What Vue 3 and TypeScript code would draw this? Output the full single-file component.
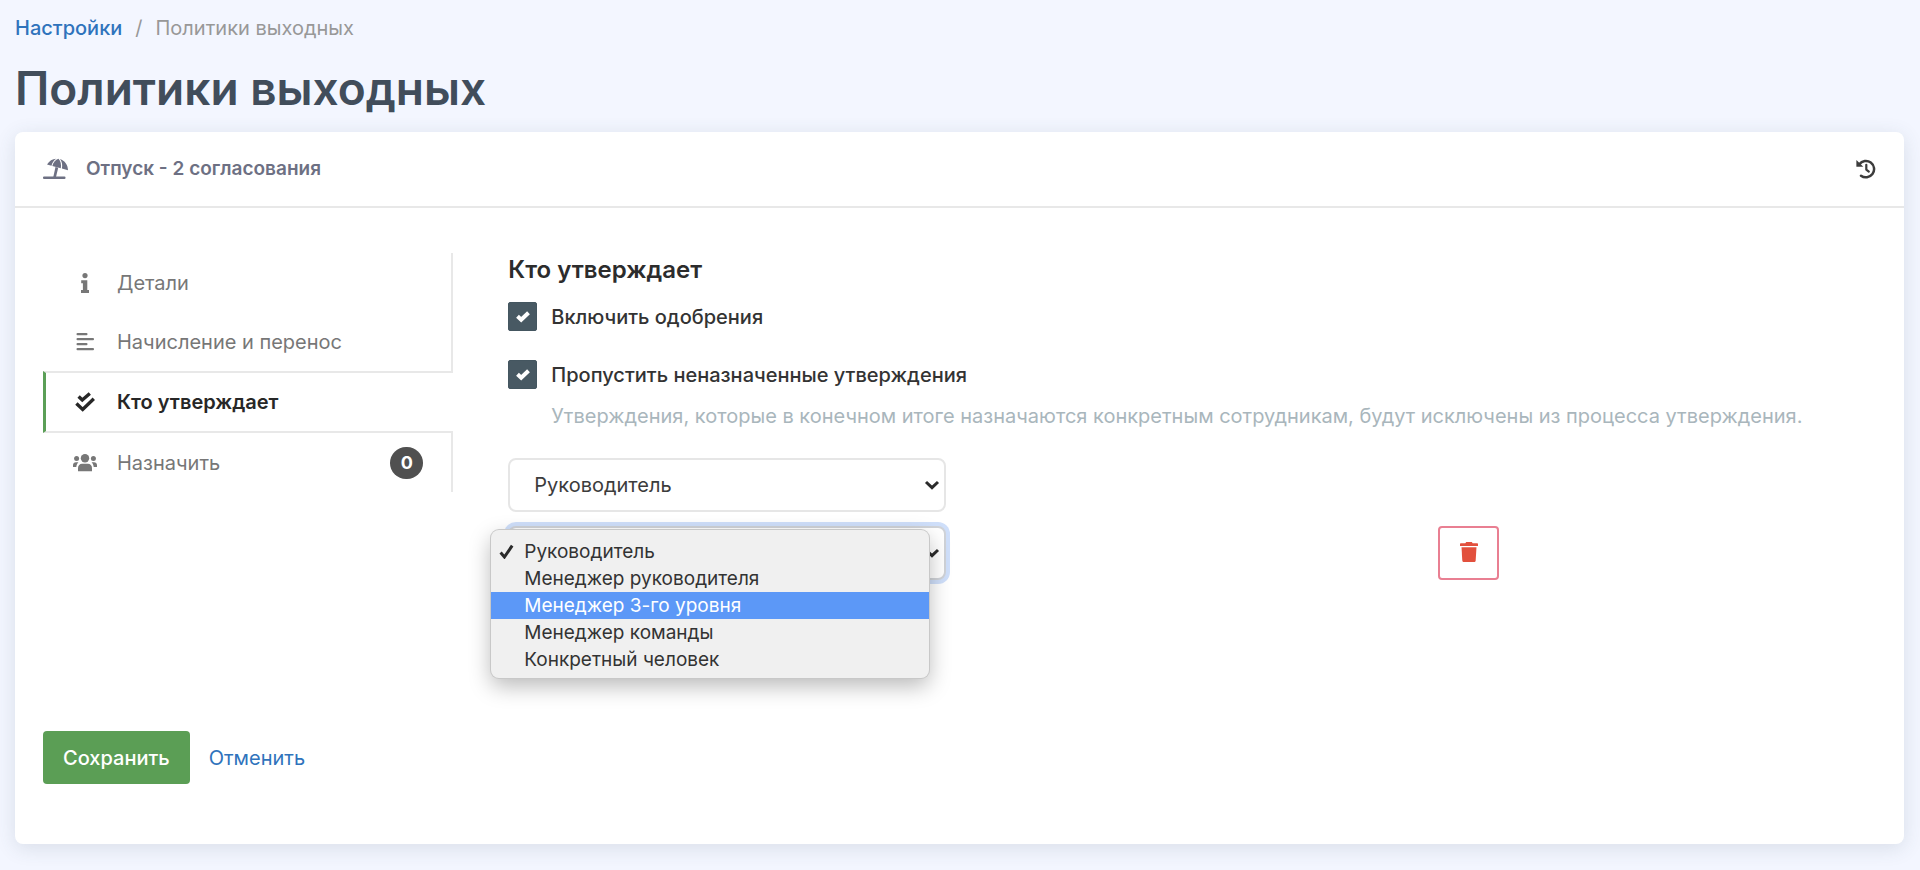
<script setup lang="ts">
import { ref } from 'vue'

interface Tab {
  id: string
  label: string
  count?: number
}

const tabs: Tab[] = [
  { id: 'details', label: 'Детали' },
  { id: 'accrual', label: 'Начисление и перенос' },
  { id: 'approvers', label: 'Кто утверждает' },
  { id: 'assign', label: 'Назначить', count: 0 },
]
const activeTab = ref('approvers')

const roles: string[] = [
  'Руководитель',
  'Менеджер руководителя',
  'Менеджер 3-го уровня',
  'Менеджер команды',
  'Конкретный человек',
]
const firstApprover = ref(roles[0])
const secondApprover = ref(roles[0])
const highlighted = ref(2)
const menuOpen = ref(true)

const approvalsEnabled = ref(true)
const skipUnassigned = ref(true)

function choose(role: string): void {
  secondApprover.value = role
  menuOpen.value = false
}
</script>

<template>
  <div class="page">
    <nav class="crumbs" aria-label="Навигация">
      <a href="#">Настройки</a>
      <span class="slash">/</span>
      <span>Политики выходных</span>
    </nav>
    <h1>Политики выходных</h1>

    <form class="card" @submit.prevent>
      <header class="card-head">
        <svg class="umbrella" viewBox="0 0 26 22" aria-hidden="true">
          <g fill="currentColor">
            <path d="M4 6.6C6.2 2.800 9.500.8 13.200.7 10.800 2.300 9.200 4.600 8.500 7.700Z" />
            <path d="M9.300 8C10.300 4.500 12.300 1.900 15.500.8 17.800 3.200 18.400 6.600 17.800 10.200Z" />
            <path d="M17 1.100C21.800 2.800 24.900 6.800 25 12.300L18.900 10.600C19.600 7 19.200 3.900 17 1.100Z" />
            <path d="M12.500 9 15.200 9.800 13 19H10.300Z" />
            <rect x="0" y="18.500" width="22.500" height="2.400" rx="1" />
          </g>
        </svg>
        <h2>Отпуск - 2 согласования</h2>
        <button type="button" class="history" aria-label="История">
          <svg viewBox="0 0 20 20" fill="none" stroke="currentColor" aria-hidden="true">
            <path d="M3.300 5.200A8.200 8.200 0 1 1 5 16.700" stroke-width="2.500" stroke-linecap="round" />
            <path d="M.4 1V7.700H7.300Z" fill="currentColor" stroke="none" />
            <path d="M10.300 5.800V10.600L12.800 12.600" stroke-width="2.200" stroke-linecap="round" stroke-linejoin="round" />
          </svg>
        </button>
      </header>

      <div class="card-body">
        <div class="columns">
          <nav class="tabs" aria-label="Разделы политики">
            <a
              v-for="tab in tabs"
              :key="tab.id"
              href="#"
              class="tab"
              :class="{ active: tab.id === activeTab }"
              @click.prevent="activeTab = tab.id"
            >
              <svg v-if="tab.id === 'details'" viewBox="0 0 24 20" fill="currentColor" aria-hidden="true">
                <circle cx="12" cy="2.600" r="2.600" />
                <path d="M8.200 7.200H14.300V16.900H16V20H8V16.900H9.900V10.300H8.200Z" />
              </svg>
              <svg v-else-if="tab.id === 'accrual'" viewBox="0 0 24 20" fill="currentColor" aria-hidden="true">
                <rect x="3.500" y="1" width="11" height="2.200" rx="1" />
                <rect x="3.500" y="6" width="17.500" height="2.200" rx="1" />
                <rect x="3.500" y="11" width="11" height="2.200" rx="1" />
                <rect x="3.500" y="16" width="17.500" height="2.200" rx="1" />
              </svg>
              <svg v-else-if="tab.id === 'approvers'" viewBox="0 0 24 20" fill="none" stroke="currentColor" stroke-width="3.400" aria-hidden="true">
                <path d="M5.600 4.500 9.300 8 16.800 1.500" />
                <path d="M3.400 11.500 9.700 17.400 20.800 6.800" />
              </svg>
              <svg v-else viewBox="0 0 24 20" fill="currentColor" aria-hidden="true">
                <circle cx="12" cy="5.300" r="4.200" />
                <path d="M5 18.200V15.300C5 12.400 6.800 10.800 9 10.800H15C17.200 10.800 19 12.400 19 15.300V18.200Z" />
                <circle cx="3.600" cy="5.600" r="2.500" />
                <circle cx="20.400" cy="5.600" r="2.500" />
                <path d="M0 14V12.200C0 10.500 1.200 9.300 3 9.300H5.400C4.200 10.600 3.400 12.200 3.300 14Z" />
                <path d="M24 14V12.200C24 10.500 22.800 9.300 21 9.300H18.600C19.800 10.600 20.600 12.200 20.700 14Z" />
              </svg>
              <span class="tab-label">{{ tab.label }}</span>
              <span v-if="tab.count !== undefined" class="badge">{{ tab.count }}</span>
            </a>
          </nav>

          <section class="panel">
            <h3>Кто утверждает</h3>

            <div class="check">
              <span class="box">
                <input id="enable" v-model="approvalsEnabled" type="checkbox" />
                <svg viewBox="0 0 14 12" aria-hidden="true"><path d="M1.500 5.300 5.200 8.800 12.500 1.800" /></svg>
              </span>
              <label for="enable">Включить одобрения</label>
            </div>
            <div class="check">
              <span class="box">
                <input id="skip" v-model="skipUnassigned" type="checkbox" aria-describedby="skip-hint" />
                <svg viewBox="0 0 14 12" aria-hidden="true"><path d="M1.500 5.300 5.200 8.800 12.500 1.800" /></svg>
              </span>
              <label for="skip">Пропустить неназначенные утверждения</label>
            </div>
            <p id="skip-hint" class="hint">
              Утверждения, которые в конечном итоге назначаются конкретным сотрудникам, будут исключены из процесса утверждения.
            </p>

            <div class="row">
              <div class="field">
                <select v-model="firstApprover" aria-label="Первый утверждающий">
                  <option v-for="role in roles" :key="role">{{ role }}</option>
                </select>
                <svg class="chevron" viewBox="0 0 16 10" aria-hidden="true"><path d="M2 2 8 7.600 14 2" /></svg>
              </div>
            </div>
            <div class="row">
              <div class="field focused">
                <select v-model="secondApprover" aria-label="Второй утверждающий">
                  <option v-for="role in roles" :key="role">{{ role }}</option>
                </select>
                <svg class="chevron" viewBox="0 0 16 10" aria-hidden="true"><path d="M2 2 8 7.600 14 2" /></svg>
                <ul v-if="menuOpen" class="menu" role="listbox" aria-label="Второй утверждающий">
                  <li
                    v-for="(role, i) in roles"
                    :key="role"
                    role="option"
                    :aria-selected="role === secondApprover"
                    :class="{ hot: i === highlighted }"
                    @mouseenter="highlighted = i"
                    @click="choose(role)"
                  >
                    <span class="mark">
                      <svg v-if="role === secondApprover" viewBox="0 0 15 15" aria-hidden="true"><path d="M1.600 8.600 5.400 13 13.200 1.600" /></svg>
                    </span>
                    {{ role }}
                  </li>
                </ul>
              </div>
              <button type="button" class="trash" aria-label="Удалить">
                <svg viewBox="0 0 18 20" fill="currentColor" aria-hidden="true">
                  <path d="M6.200 0H11.800L12.700 1.300H17C17.600 1.300 18 1.700 18 2.300V3.900H0V2.300C0 1.700.4 1.300 1 1.300H5.300Z" />
                  <path d="M1.500 5.200H16.500L15.700 18.400C15.600 19.400 14.900 20 14 20H4C3.100 20 2.400 19.400 2.300 18.400Z" />
                </svg>
              </button>
            </div>
          </section>
        </div>

        <footer class="actions">
          <button type="submit" class="save">Сохранить</button>
          <a href="#">Отменить</a>
        </footer>
      </div>
    </form>
  </div>
</template>

<style>
html,
body {
  margin: 0;
  background: #f3f6ff;
}
</style>

<style scoped>
.page {
  box-sizing: border-box;
  min-height: 100vh;
  padding: 14px 16px 24px 15px;
  font-family: Inter, "Noto Sans", sans-serif;
  font-size: 20px;
  line-height: 28px;
  color: #333;
}
*,
*::before {
  box-sizing: border-box;
}
h1,
h2,
h3,
p,
ul {
  margin: 0;
  padding: 0;
}
svg {
  display: block;
  flex: none;
}
button,
select {
  font: inherit;
  cursor: pointer;
}
a {
  color: #2f73bc;
  text-decoration: none;
}

.crumbs {
  display: flex;
  color: #989898;
}
.crumbs a {
  font-weight: 500;
}
.slash {
  margin: 0 13px;
}
h1 {
  margin: 18px 0 16px;
  font-size: 46px;
  line-height: 56px;
  font-weight: 600;
  color: #414d5b;
}

.card {
  background: #fff;
  border-radius: 8px;
  box-shadow: 0 4px 20px rgba(60, 75, 95, 0.14);
}
.card-head {
  display: flex;
  align-items: center;
  height: 76px;
  padding: 0 28px;
  border-bottom: 2px solid #e8e8e8;
  color: #6d7083;
}
.umbrella {
  width: 26px;
  height: 22px;
}
h2 {
  flex: 1;
  margin-left: 17px;
  font-size: 19px;
  line-height: 28px;
  font-weight: 600;
}
.history {
  padding: 0;
  border: 0;
  background: none;
  color: #3c3c3c;
}
.history svg {
  width: 20px;
  height: 20px;
}

.card-body {
  padding: 45px 28px 60px;
}
.columns {
  display: grid;
  grid-template-columns: minmax(0, 3fr) minmax(0, 10fr);
  gap: 55px;
  align-items: start;
}

.tab {
  display: flex;
  align-items: center;
  height: 59px;
  padding: 0 28px 0 30px;
  border-right: 2px solid #e8e8e8;
  color: #777;
}
.tab svg {
  width: 24px;
  height: 20px;
}
.tab-label {
  flex: 1;
  margin-left: 20px;
}
.tab.active {
  height: 62px;
  padding-left: 27px;
  border: solid #e8e8e8;
  border-width: 2px 0;
  border-left: 3px solid #5b9f57;
  font-weight: 600;
  color: #272727;
}
.badge {
  width: 33px;
  height: 32px;
  border-radius: 16px;
  background: #505050;
  color: #fff;
  font-size: 18px;
  line-height: 32px;
  font-weight: 700;
  text-align: center;
}

h3 {
  margin-bottom: 15px;
  font-size: 24px;
  line-height: 34px;
  font-weight: 600;
  color: #2c2c2c;
}
.check {
  display: flex;
  align-items: center;
  gap: 14px;
  height: 29px;
  margin-bottom: 29px;
  font-weight: 500;
}
.box {
  display: grid;
  place-items: center;
}
.box > * {
  grid-area: 1 / 1;
}
.box input {
  width: 29px;
  height: 29px;
  margin: 0;
  appearance: none;
  border: 1px solid #445660;
  border-radius: 2px;
  background: #fff;
  cursor: pointer;
}
.box input:checked {
  background: #485963;
}
.box svg {
  width: 14px;
  height: 12px;
  fill: none;
  stroke: #fff;
  stroke-width: 4;
  pointer-events: none;
}
.hint {
  margin: -16px 0 28px 43px;
  color: #a9b6bc;
}

.row {
  display: grid;
  grid-template-columns: 8fr 9fr 8fr;
  align-items: center;
  margin-bottom: 14px;
}
.field {
  position: relative;
}
.field select {
  display: block;
  width: 100%;
  height: 54px;
  padding: 0 48px 0 24px;
  appearance: none;
  border: 2px solid #e6e6e6;
  border-radius: 8px;
  background: #fff;
  color: #3c3c3c;
  outline: none;
}
.focused select {
  border-color: #d0d3d8;
  box-shadow: 0 0 0 4px #cfdffa;
}
.chevron {
  position: absolute;
  top: 22px;
  right: 6px;
  width: 16px;
  height: 10px;
  fill: none;
  stroke: #2b2b2b;
  stroke-width: 3;
  pointer-events: none;
}
.menu {
  position: absolute;
  z-index: 2;
  top: 4px;
  left: -17px;
  width: 438px;
  padding: 8px 0 5px;
  list-style: none;
  background: #f0f0f0;
  border-radius: 8px;
  box-shadow: 0 0 0 1px #c8c8c8, 0 8px 22px rgba(0, 0, 0, 0.28);
  font-size: 19px;
}
.menu li {
  display: flex;
  align-items: center;
  height: 27px;
  line-height: 27px;
  cursor: default;
}
.menu .hot {
  background: #5c98f7;
  color: #fff;
}
.mark {
  width: 33px;
  padding-left: 8px;
}
.mark svg {
  width: 15px;
  height: 15px;
  fill: none;
  stroke: #2b2b2b;
  stroke-width: 3;
}
.trash {
  grid-column: 3;
  display: flex;
  align-items: center;
  justify-content: center;
  width: 61px;
  height: 54px;
  padding: 0 0 2px;
  border: 2px solid #e97f92;
  border-radius: 4px;
  background: #fff;
  color: #e2503d;
}
.trash svg {
  width: 18px;
  height: 20px;
}

.actions {
  display: flex;
  align-items: center;
  gap: 19px;
  margin-top: 137px;
}
.save {
  height: 53px;
  padding: 0 20px;
  border: 0;
  border-radius: 4px;
  background: #5b9e55;
  color: #fff;
  font-weight: 500;
}
</style>
